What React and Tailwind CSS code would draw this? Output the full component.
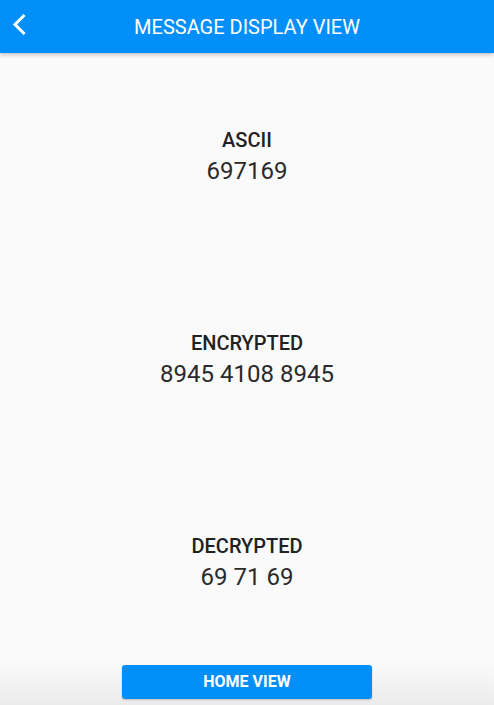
export default function App() {
  const blocks = [
    ["ASCII", "697169"],
    ["ENCRYPTED", "8945 4108 8945"],
    ["DECRYPTED", "69 71 69"],
  ];
  return (
    <div className="relative flex h-[705px] w-[494px] flex-col overflow-hidden bg-[#fafafa] font-['Roboto',sans-serif]">
      <div className="relative z-10 flex h-[53px] shrink-0 items-center justify-center bg-[#038ffa] shadow-[0_2px_4px_rgba(0,0,0,0.22)]">
        <svg
          className="absolute left-[11px] top-[13px]"
          width="17"
          height="23"
          viewBox="0 0 17 23"
          fill="none"
        >
          <polyline
            points="12.5,3 4,11.5 12.5,20"
            stroke="white"
            strokeWidth="3"
            strokeLinecap="square"
            strokeLinejoin="miter"
          />
        </svg>
        <span className="text-[20px] leading-[24px] text-white">MESSAGE DISPLAY VIEW</span>
      </div>
      <div className="flex flex-col items-center gap-[140px] pt-[75px] text-[#212121]">
        {blocks.map(([label, value]) => (
          <div key={label} className="flex flex-col items-center">
            <div className="text-[20px] font-medium leading-[24px]">{label}</div>
            <div className="text-[24px] leading-[39px] text-[#2a2a2a]">{value}</div>
          </div>
        ))}
      </div>
      <div className="absolute bottom-0 left-0 h-[40px] w-full bg-gradient-to-b from-[#fafafa] to-[#ebebeb]" />
      <div className="relative mt-auto flex justify-center pb-[6px]">
        <button className="flex h-[34px] w-[250px] items-center justify-center rounded-[3px] bg-[#038ffa] text-[16px] font-bold leading-none text-white shadow-[0_1px_2px_rgba(0,0,0,0.2)]">
          HOME VIEW
        </button>
      </div>
    </div>
  );
}
